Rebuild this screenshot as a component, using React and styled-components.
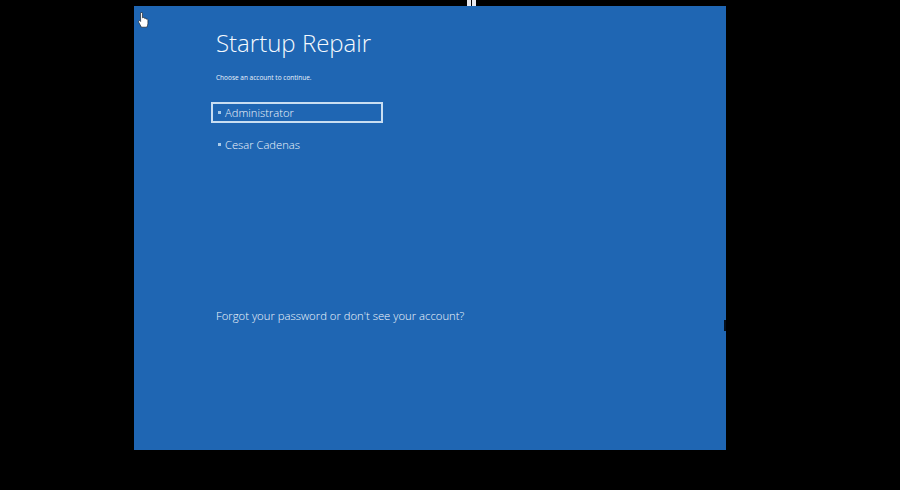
import React from "react";
import styled, { createGlobalStyle } from "styled-components";

const GlobalStyle = createGlobalStyle`
  html, body {
    margin: 0;
    padding: 0;
    background: #000;
  }
  body {
    font-family: "Open Sans", "Liberation Sans", sans-serif;
    font-weight: 300;
  }
`;

const accounts = [
  { name: "Administrator", selected: true },
  { name: "Cesar Cadenas", selected: false },
];

const HandCursor = () => (
  <CursorIcon viewBox="0 0 11 16" width="11" height="16">
    <path
      d="M2.6 1.2c0-1 1.9-1 1.9 0v4.6l.6-.1c.7-.4 1.4-.2 1.5.4l.1.4c.6-.4 1.3-.2 1.5.4l.1.3c.7-.3 1.6 0 1.6.9v3.3c0 1.6-.7 2.7-1.1 3.8H3.4L.8 10.4C.1 9.2.8 8.2 1.8 8.7l.8.8z"
      fill="#fff"
      stroke="#111"
      strokeWidth="0.6"
    />
  </CursorIcon>
);

export default function App() {
  return (
    <>
      <GlobalStyle />
      <Screen>
        <TopMarker>
          <MarkerBar />
          <MarkerBar />
        </TopMarker>
        <Panel>
          <HandCursor />
          <Title>Startup Repair</Title>
          <Subtitle>Choose an account to continue.</Subtitle>
          <AccountList>
            {accounts.map((account) => (
              <Account key={account.name} $selected={account.selected}>
                <Bullet />
                {account.name}
              </Account>
            ))}
          </AccountList>
          <ForgotLink>Forgot your password or don't see your account?</ForgotLink>
          <EdgeNotch />
        </Panel>
      </Screen>
    </>
  );
}

const Screen = styled.div`
  position: relative;
  width: 900px;
  height: 490px;
  padding-top: 6px;
  box-sizing: border-box;
  background: #000;
  overflow: hidden;
`;

const TopMarker = styled.div`
  position: absolute;
  top: 0;
  left: 467px;
  display: flex;
  gap: 1px;
`;

const MarkerBar = styled.div`
  width: 4px;
  height: 6px;
  background: #e8e8ee;
`;

const Panel = styled.main`
  position: relative;
  width: 592px;
  height: 444px;
  margin-left: 134px;
  padding: 21px 0 0 82px;
  box-sizing: border-box;
  display: flex;
  flex-direction: column;
  align-items: flex-start;
  background: #1f66b3;
  color: #fff;
`;

const CursorIcon = styled.svg`
  position: absolute;
  top: 6px;
  left: 4px;
`;

const Title = styled.h1`
  margin: 0;
  font-size: 24px;
  line-height: 32px;
  font-weight: 300;
  color: #f6fafe;
`;

const Subtitle = styled.p`
  margin: 14px 0 0;
  font-size: 6.5px;
  line-height: 10px;
  font-weight: 400;
  color: #eaf2fb;
`;

const AccountList = styled.div`
  display: flex;
  flex-direction: column;
  gap: 11px;
  margin: 19px 0 0 -5px;
`;

const Account = styled.div`
  display: flex;
  align-items: center;
  width: 172px;
  height: 21px;
  padding-left: 5px;
  box-sizing: border-box;
  border: 2px solid ${(p) => (p.$selected ? "#c9def2" : "transparent")};
  font-size: 11.2px;
  color: #eef5fc;
`;

const Bullet = styled.span`
  width: 3px;
  height: 3px;
  margin-right: 4px;
  background: #a9cbe9;
`;

const ForgotLink = styled.div`
  margin-top: 153px;
  font-size: 11.3px;
  line-height: 16px;
  color: #f2f7fd;
`;

const EdgeNotch = styled.div`
  position: absolute;
  top: 314px;
  right: 0;
  width: 2px;
  height: 11px;
  background: #06101c;
`;
